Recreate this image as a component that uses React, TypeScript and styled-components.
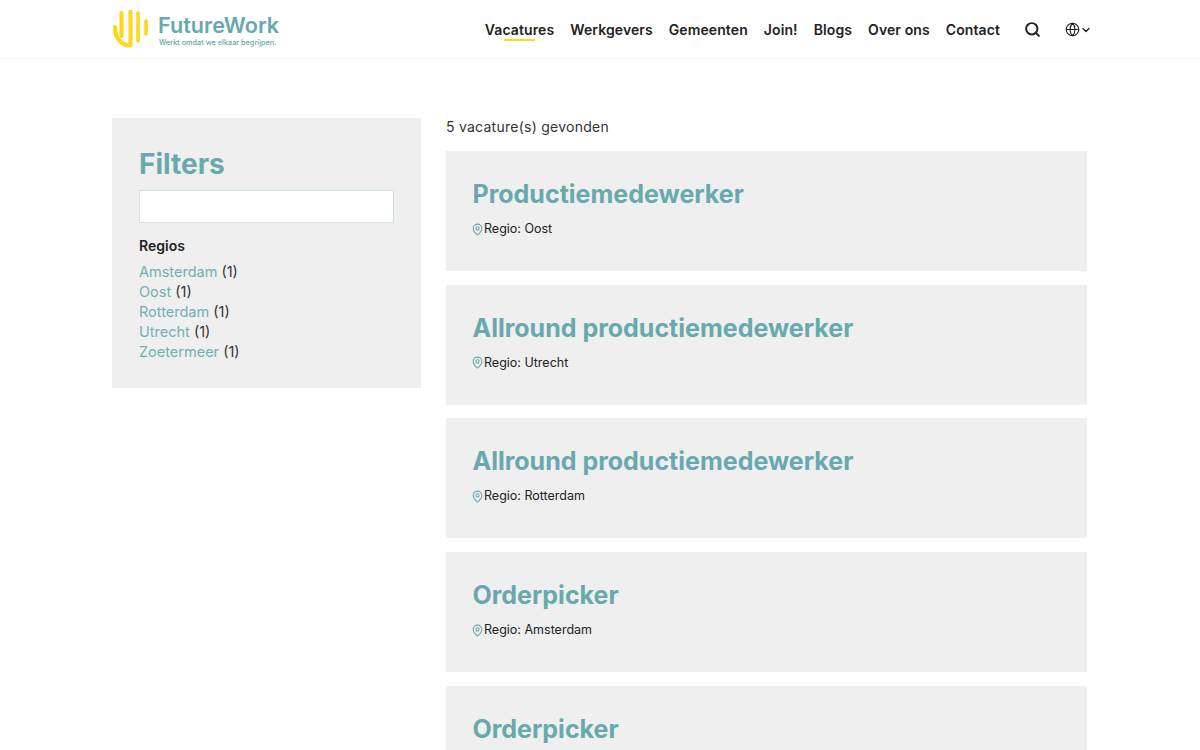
import React, { FC } from 'react'
import styled, { createGlobalStyle } from 'styled-components'
import { MapPin, Search, Globe, ChevronDown } from 'lucide-react'

const GlobalStyle = createGlobalStyle`
  html, body { margin: 0; padding: 0; background: #fff; overflow: hidden; }
  body { font-family: Inter, "Liberation Sans", sans-serif; color: #222; }
  * { box-sizing: border-box; }
`

const Page = styled.div`
  height: 750px;
  overflow: hidden;
`

const Header = styled.header`
  height: 59px;
  border-bottom: 1px solid #f4f4f4;
  padding: 0 108px 0 112px;
  display: flex;
  align-items: center;
  justify-content: space-between;
`

const Brand = styled.a`
  display: flex;
  align-items: center;
  gap: 9px;
`

const BrandText = styled.div`
  display: flex;
  flex-direction: column;
  padding-top: 3px;
`

const BrandName = styled.span`
  font-size: 21.6px;
  line-height: 25px;
  font-weight: 600;
  color: #68a9ae;
`

const BrandTag = styled.span`
  font-size: 7.3px;
  line-height: 10px;
  font-weight: 500;
  color: #68a9ae;
  margin-left: 1px;
`

const Nav = styled.nav`
  display: flex;
  align-items: center;
  padding-top: 1px;
`

const NavLink = styled.a<{ $active?: boolean }>`
  position: relative;
  font-size: 14px;
  font-weight: 600;
  letter-spacing: 0.1px;
  color: #222;
  margin-right: 16px;
  line-height: 20px;

  &::after {
    content: '';
    display: ${(p) => (p.$active ? 'block' : 'none')};
    position: absolute;
    left: 19px;
    right: 19px;
    bottom: -1px;
    height: 2px;
    background: #fbd91d;
  }
`

const IconButton = styled.span`
  display: flex;
  align-items: center;
  color: #222;
  margin-left: 8px;
`

const LangButton = styled(IconButton)`
  margin-left: 24px;
  gap: 0;
`

const Main = styled.main`
  display: flex;
  align-items: flex-start;
  gap: 25px;
  padding: 58px 113px 0 112px;
`

const Sidebar = styled.aside`
  flex: 0 0 309px;
  height: 270px;
  margin-top: 1px;
  background: #efefef;
  padding: 27px 27px 0;
`

const FiltersTitle = styled.h2`
  margin: 0;
  font-size: 28px;
  line-height: 38px;
  font-weight: 700;
  color: #68a9ae;
`

const SearchInput = styled.input`
  display: block;
  width: 255px;
  height: 33px;
  margin-top: 7px;
  background: #fff;
  border: 1px solid #cfe0e0;
  outline: none;
`

const RegionsTitle = styled.h3`
  margin: 13px 0 6px;
  font-size: 14px;
  line-height: 20px;
  font-weight: 600;
  color: #222;
`

const RegionList = styled.ul`
  list-style: none;
  margin: 0;
  padding: 0;
`

const RegionItem = styled.li`
  font-size: 14.5px;
  line-height: 20px;
  color: #333;
`

const RegionLink = styled.a`
  color: #6fafb4;
`

const Results = styled.section`
  flex: 1;
  display: flex;
  flex-direction: column;
`

const ResultCount = styled.p`
  margin: 0 0 14px;
  font-size: 14px;
  letter-spacing: 0.25px;
  line-height: 20px;
  color: #333;
`

const JobCard = styled.article`
  height: 120px;
  margin-bottom: 13.7px;
  flex-shrink: 0;
  background: #efefef;
  padding: 25px 26.5px 0;
`

const JobTitle = styled.h2`
  margin: 0;
  font-size: 25px;
  line-height: 36px;
  font-weight: 700;
  color: #68a9ae;
`

const JobRegion = styled.div`
  display: flex;
  align-items: center;
  margin-top: 7px;
  font-size: 12.5px;
  line-height: 20px;
  color: #222;

  svg {
    color: #68a9ae;
    margin-left: -1.5px;
  }
`

const LogoMark: FC = () => (
  <svg width="37" height="38" viewBox="0 0 37 38" fill="none" stroke="#fbd91d" strokeWidth="4.2" strokeLinecap="round">
    <path d="M3 17 C3 27 8 35 18 35.5" />
    <path d="M9.5 3 V26" />
    <path d="M18.5 1.5 V35" />
    <path d="M26 3 V31" strokeWidth="3.6" />
    <path d="M34 11 V24" strokeWidth="3.6" />
  </svg>
)

const navItems = ['Vacatures', 'Werkgevers', 'Gemeenten', 'Join!', 'Blogs', 'Over ons', 'Contact']

const regions = ['Amsterdam', 'Oost', 'Rotterdam', 'Utrecht', 'Zoetermeer']

const jobs = [
  { title: 'Productiemedewerker', region: 'Oost' },
  { title: 'Allround productiemedewerker', region: 'Utrecht' },
  { title: 'Allround productiemedewerker', region: 'Rotterdam' },
  { title: 'Orderpicker', region: 'Amsterdam' },
  { title: 'Orderpicker', region: 'Zoetermeer' },
]

const App: FC = () => (
  <Page>
    <GlobalStyle />
    <Header>
      <Brand>
        <LogoMark />
        <BrandText>
          <BrandName>FutureWork</BrandName>
          <BrandTag>Werkt omdat we elkaar begrijpen.</BrandTag>
        </BrandText>
      </Brand>
      <Nav>
        {navItems.map((item, i) => (
          <NavLink key={item} $active={i === 0}>
            {item}
          </NavLink>
        ))}
        <IconButton>
          <Search size={17} strokeWidth={2.8} />
        </IconButton>
        <LangButton>
          <Globe size={15} strokeWidth={1.8} />
          <ChevronDown size={12} strokeWidth={2.8} />
        </LangButton>
      </Nav>
    </Header>
    <Main>
      <Sidebar>
        <FiltersTitle>Filters</FiltersTitle>
        <SearchInput />
        <RegionsTitle>Regios</RegionsTitle>
        <RegionList>
          {regions.map((r) => (
            <RegionItem key={r}>
              <RegionLink>{r}</RegionLink> (1)
            </RegionItem>
          ))}
        </RegionList>
      </Sidebar>
      <Results>
        <ResultCount>5 vacature(s) gevonden</ResultCount>
        {jobs.map((job, i) => (
          <JobCard key={i}>
            <JobTitle>{job.title}</JobTitle>
            <JobRegion>
              <MapPin size={13} strokeWidth={2} />
              Regio: {job.region}
            </JobRegion>
          </JobCard>
        ))}
      </Results>
    </Main>
  </Page>
)

export default App
